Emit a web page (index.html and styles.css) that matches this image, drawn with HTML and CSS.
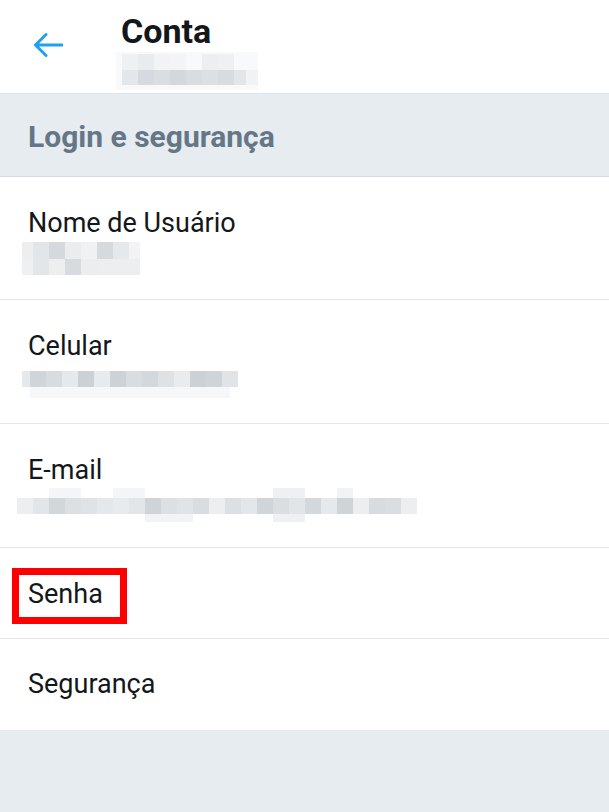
FILE: index.html
```html
<!DOCTYPE html>
<html lang="pt-BR">
<head>
<meta charset="utf-8">
<title>Conta</title>
<link rel="stylesheet" href="styles.css">
</head>
<body>
<div class="screen">
  <header class="header">
    <svg class="back" width="30" height="26" viewBox="0 0 30 26" aria-hidden="true">
      <path d="M29 13H3M13 2.5L2.5 13L13 23.5" fill="none" stroke="#1da1f2" stroke-width="3" stroke-linecap="round" stroke-linejoin="round"/>
    </svg>
    <div class="title-col">
      <h1 class="title">Conta</h1>
      <svg class="mosaic" width="142" height="38" viewBox="0 0 142 38" aria-hidden="true">
        <rect x="0" y="0" width="142" height="38" fill="#f8f9fa"/>
        <rect x="6" y="2" width="16" height="16" fill="#eef0f2"/>
        <rect x="22" y="2" width="16" height="16" fill="#e9ecee"/>
        <rect x="38" y="2" width="16" height="16" fill="#f1f3f4"/>
        <rect x="54" y="2" width="16" height="16" fill="#f3f4f5"/>
        <rect x="86" y="2" width="16" height="16" fill="#eceef0"/>
        <rect x="102" y="2" width="16" height="16" fill="#eef0f2"/>
        <rect x="6" y="18" width="16" height="15" fill="#e4e7ea"/>
        <rect x="22" y="18" width="16" height="15" fill="#d6dade"/>
        <rect x="38" y="18" width="16" height="15" fill="#dadee1"/>
        <rect x="54" y="18" width="16" height="15" fill="#d4d8dc"/>
        <rect x="70" y="18" width="16" height="15" fill="#d9dde0"/>
        <rect x="86" y="18" width="16" height="15" fill="#dde0e3"/>
        <rect x="102" y="18" width="16" height="15" fill="#d8dcdf"/>
        <rect x="118" y="18" width="12" height="15" fill="#e3e6e9"/>
        <rect x="130" y="18" width="12" height="15" fill="#f0f2f3"/>
      </svg>
    </div>
  </header>

  <div class="section">Login e segurança</div>

  <div class="row row-user">
    <div class="label">Nome de Usuário</div>
    <svg class="mosaic value" width="118" height="33" viewBox="0 0 118 33" aria-hidden="true">
      <rect x="0" y="0" width="11" height="17" fill="#eceef0"/>
      <rect x="11" y="0" width="16" height="17" fill="#e3e6e9"/>
      <rect x="27" y="0" width="16" height="17" fill="#d5d9dd"/>
      <rect x="43" y="0" width="16" height="17" fill="#eaecee"/>
      <rect x="59" y="0" width="16" height="17" fill="#eff1f2"/>
      <rect x="75" y="0" width="16" height="17" fill="#d6dadd"/>
      <rect x="91" y="0" width="16" height="17" fill="#e6e9eb"/>
      <rect x="107" y="0" width="11" height="17" fill="#f2f3f4"/>
      <rect x="0" y="17" width="11" height="16" fill="#eef0f1"/>
      <rect x="11" y="17" width="16" height="16" fill="#e3e6e9"/>
      <rect x="27" y="17" width="16" height="16" fill="#eceef0"/>
      <rect x="43" y="17" width="16" height="16" fill="#d7dbdf"/>
      <rect x="59" y="17" width="16" height="16" fill="#ebedef"/>
      <rect x="75" y="17" width="43" height="16" fill="#eceef0"/>
    </svg>
  </div>

  <div class="row row-phone">
    <div class="label">Celular</div>
    <svg class="mosaic value" width="216" height="33" viewBox="0 0 216 33" aria-hidden="true">
      <rect x="0" y="6" width="216" height="16" fill="#e6e9eb"/>
      <rect x="8" y="6" width="16" height="16" fill="#d0d5da"/>
      <rect x="24" y="6" width="16" height="16" fill="#d8dcdf"/>
      <rect x="40" y="6" width="16" height="16" fill="#e6e9eb"/>
      <rect x="56" y="6" width="16" height="16" fill="#ccd1d6"/>
      <rect x="72" y="6" width="16" height="16" fill="#e8ebed"/>
      <rect x="88" y="6" width="16" height="16" fill="#cdd2d7"/>
      <rect x="104" y="6" width="16" height="16" fill="#d9dde0"/>
      <rect x="120" y="6" width="16" height="16" fill="#d3d8dc"/>
      <rect x="136" y="6" width="16" height="16" fill="#dfe2e5"/>
      <rect x="152" y="6" width="16" height="16" fill="#e9ebed"/>
      <rect x="168" y="6" width="16" height="16" fill="#ccd1d6"/>
      <rect x="184" y="6" width="16" height="16" fill="#cfd4d8"/>
      <rect x="200" y="6" width="16" height="16" fill="#e1e4e7"/>
      <rect x="8" y="22" width="200" height="12" fill="#f6f7f8"/>
    </svg>
  </div>

  <div class="row row-email">
    <div class="label">E-mail</div>
    <svg class="mosaic value email" width="400" height="36" viewBox="0 0 400 36" aria-hidden="true">
      <rect x="32" y="0" width="32" height="10" fill="#f4f5f6"/>
      <rect x="96" y="0" width="32" height="10" fill="#f4f5f6"/>
      <rect x="256" y="0" width="32" height="10" fill="#eef0f1"/>
      <rect x="320" y="0" width="16" height="10" fill="#f2f3f4"/>
      <rect x="0" y="10" width="16" height="16" fill="#eceef0"/>
      <rect x="16" y="10" width="16" height="16" fill="#e3e6e9"/>
      <rect x="32" y="10" width="16" height="16" fill="#d2d7db"/>
      <rect x="48" y="10" width="16" height="16" fill="#dde0e3"/>
      <rect x="64" y="10" width="16" height="16" fill="#e0e3e6"/>
      <rect x="80" y="10" width="16" height="16" fill="#e5e8ea"/>
      <rect x="96" y="10" width="16" height="16" fill="#e8ebed"/>
      <rect x="112" y="10" width="16" height="16" fill="#e3e6e8"/>
      <rect x="128" y="10" width="16" height="16" fill="#cfd4d8"/>
      <rect x="144" y="10" width="16" height="16" fill="#dce0e3"/>
      <rect x="160" y="10" width="16" height="16" fill="#e1e4e7"/>
      <rect x="176" y="10" width="16" height="16" fill="#d9dde0"/>
      <rect x="192" y="10" width="16" height="16" fill="#eceef0"/>
      <rect x="208" y="10" width="16" height="16" fill="#dde0e3"/>
      <rect x="224" y="10" width="16" height="16" fill="#e4e7e9"/>
      <rect x="240" y="10" width="16" height="16" fill="#d0d5d9"/>
      <rect x="256" y="10" width="16" height="16" fill="#dadee1"/>
      <rect x="272" y="10" width="16" height="16" fill="#e2e5e8"/>
      <rect x="288" y="10" width="16" height="16" fill="#d3d8dc"/>
      <rect x="304" y="10" width="16" height="16" fill="#e6e9eb"/>
      <rect x="320" y="10" width="16" height="16" fill="#cfd4d8"/>
      <rect x="336" y="10" width="16" height="16" fill="#eceef0"/>
      <rect x="352" y="10" width="16" height="16" fill="#d8dcdf"/>
      <rect x="368" y="10" width="16" height="16" fill="#dadee1"/>
      <rect x="384" y="10" width="16" height="16" fill="#eceef0"/>
      <rect x="128" y="26" width="48" height="8" fill="#f1f3f4"/>
      <rect x="256" y="26" width="32" height="8" fill="#eef0f1"/>
    </svg>
  </div>

  <div class="row row-pass">
    <div class="label">Senha</div>
    <div class="highlight" aria-hidden="true"></div>
  </div>

  <div class="row row-last">
    <div class="label">Segurança</div>
  </div>
</div>
</body>
</html>
```

FILE: styles.css
```css
* { box-sizing: border-box; }

html, body {
  margin: 0;
  padding: 0;
  background: #e6ecf0;
}

body {
  font-family: Roboto, "Noto Sans", "Liberation Sans", sans-serif;
  color: #14171a;
}

.screen {
  width: 609px;
  min-height: 812px;
  background: #e6ecf0;
}

.header {
  display: flex;
  align-items: flex-start;
  height: 94px;
  padding-left: 33px;
  background: #fff;
  border-bottom: 1px solid #dfe4e8;
}

.back {
  display: block;
  margin-top: 32px;
  flex: none;
}

.title-col {
  margin-left: 53px;
  display: flex;
  flex-direction: column;
}

.title {
  margin: 12px 0 0;
  padding-left: 5px;
  font-size: 34px;
  line-height: 38px;
  font-weight: 700;
  color: #14171a;
}

.mosaic {
  display: block;
}

.title-col .mosaic {
  margin-top: 2px;
}

.section {
  height: 83px;
  padding: 25px 0 0 28px;
  font-size: 30px;
  line-height: 36px;
  font-weight: 700;
  color: #657786;
  background: #e6ecf0;
  border-bottom: 1px solid #d3dbe1;
}

.row {
  position: relative;
  background: #fff;
  padding: 32px 0 24px 28px;
  border-bottom: 1px solid #e6e6e6;
}

.label {
  font-size: 27px;
  line-height: 28px;
}

.value {
  margin-top: 5px;
  margin-left: -6px;
}

.row-phone {
  padding-bottom: 25px;
}

.row-email {
  padding-bottom: 23px;
}

.value.email {
  margin-left: -11px;
  margin-top: 4px;
}

.row-pass {
  padding-bottom: 30px;
}

.row-last {
  padding-top: 31px;
  padding-bottom: 32px;
  border-bottom: none;
}

.highlight {
  position: absolute;
  left: 12px;
  top: 20px;
  width: 115px;
  height: 56px;
  border: 7px solid #ff0000;
}
```
